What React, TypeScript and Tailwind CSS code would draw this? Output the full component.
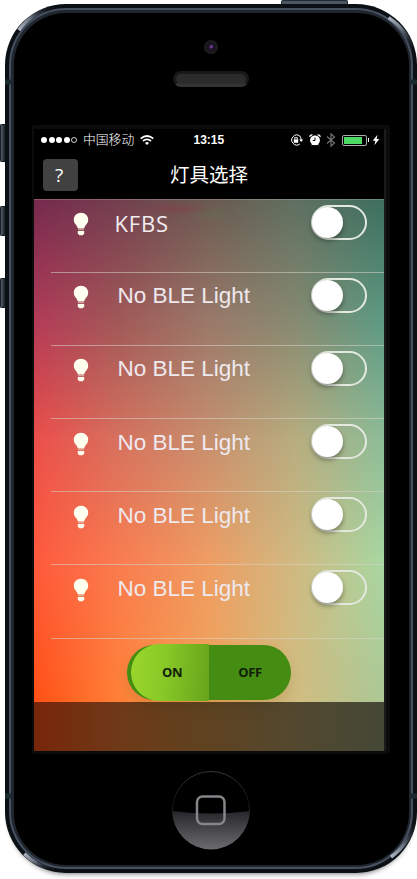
import React from "react";

const lights = ["KFBS", "No BLE Light", "No BLE Light", "No BLE Light", "No BLE Light", "No BLE Light"];

function Bulb() {
  return (
    <svg viewBox="0 0 16 24" className="h-6 w-4 shrink-0" fill="#fffff0">
      <path d="M8 .8C3.900.8.800 3.700.800 7.700c0 2.800 1.600 4.300 2.900 6.100.7 1 .9 1.900 1.200 2.700h6.200c.3-.8.5-1.700 1.200-2.700 1.300-1.800 2.900-3.300 2.900-6.100C15.200 3.700 12.100.8 8 .8Z" />
      <path d="M5 17.200h6v1H5Z" fill="#dcb5a8" />
      <path d="M4.800 19.100h6.400v2.300l-1.500 1.800H6.300l-1.500-1.800Z" />
    </svg>
  );
}

function Toggle() {
  return (
    <div className="flex h-[35px] w-14 items-center rounded-full border-2 border-[#e4e9e0] shadow-[inset_1px_0_1px_rgba(90,90,90,0.3)]">
      <div className="-ml-px h-[31px] w-[31px] shrink-0 rounded-full bg-white shadow-[0_3px_5px_rgba(0,0,0,0.35)]" />
    </div>
  );
}

function LightRow({ name, first }: { name: string; first: boolean }) {
  return (
    <div className="ml-[17px] h-[73.2px] border-b border-[#d8d4cc]/55 pt-[5px]">
      <div className="flex h-[35px] items-center pr-[17px]">
        <div className="ml-[22px] mt-[4px]">
          <Bulb />
        </div>
        {first ? (
          <span className="ml-[25.500px] mt-px flex-1 font-['Open_Sans',sans-serif] text-[22px] leading-6 tracking-[0.8px] text-[#f3edf0]">{name}</span>
        ) : (
          <span className="ml-[28.500px] mt-[2px] flex-1 whitespace-nowrap font-['Liberation_Sans',Arial,sans-serif] text-[22.5px] leading-6 text-[#eee9ee]">{name}</span>
        )}
        <Toggle />
      </div>
    </div>
  );
}

function StatusBar() {
  return (
    <div className="flex h-[23px] items-center text-white">
      <div className="ml-[7px] flex gap-[1.500px]">
        <i className="h-1.5 w-1.5 rounded-full bg-white" />
        <i className="h-1.5 w-1.5 rounded-full bg-white" />
        <i className="h-1.5 w-1.5 rounded-full bg-white" />
        <i className="h-1.5 w-1.5 rounded-full bg-white" />
        <i className="h-1.5 w-1.5 rounded-full border border-white/80" />
      </div>
      <span className="ml-[6px] w-[52px] whitespace-nowrap font-['Liberation_Sans','Noto_Sans_CJK_SC',sans-serif] text-[12.8px] font-light leading-4">中国移动</span>
      <svg viewBox="0 0 14 10" className="ml-[5px] h-2.5 w-3.5" fill="none" stroke="white" strokeWidth="1.7">
        <path d="M.7 3.600Q7-1.600 13.300 3.600M3 6Q7 2.600 11 6" />
        <path d="M5 8Q7 6 9 8L7 10Z" fill="white" stroke="none" />
      </svg>
      <span className="ml-[39.500px] w-[32px] whitespace-nowrap font-['Liberation_Sans',Arial,sans-serif] text-[12px] font-bold leading-4">13:15</span>
      <svg viewBox="0 0 14 12" className="ml-[64px] h-3 w-3.5 shrink-0" fill="none" stroke="white">
        <path d="M9.800 2A5 5 0 1 0 9.800 10" />
        <path d="M9.800 2A5 5 0 0 1 11 6" />
        <path d="M9.200 5.500h4l-2 2.400Z" fill="white" stroke="none" />
        <path d="M3.800 5.300h4.400v3.500H3.800Z" fill="white" stroke="none" />
        <path d="M4.700 5.500V3.600h2.600v1.900" strokeWidth=".9" />
      </svg>
      <svg viewBox="0 0 12 12" className="ml-[5.500px] h-3 w-3 shrink-0" fill="white">
        <circle cx="6" cy="6.300" r="4.900" />
        <path d="M.5 3.200A2.200 2.200 0 0 1 4 .8ZM11.500 3.200A2.200 2.200 0 0 0 8 .8ZM2 11.500l1.500-2h5l1.500 2-2-.7H4Z" />
        <path d="M6 3.500v3H3.800" fill="none" stroke="black" />
      </svg>
      <svg viewBox="0 0 10 14" className="ml-[5px] h-3.5 w-2.5 shrink-0" fill="none" stroke="#777" strokeWidth="1.100">
        <path d="M1 3.500l7.500 6.500L5 13.200V.8L8.500 4 1 10.500" />
      </svg>
      <div className="ml-[5.500px] h-[11px] w-[25px] shrink-0 rounded-[2px] border border-[#aaa] p-px">
        <div className="h-full w-[18px] bg-[#4cd964]" />
      </div>
      <i className="ml-px h-1 w-px bg-white" />
      <svg viewBox="0 0 8 12" className="ml-[3px] h-3 w-2 shrink-0" fill="white">
        <path d="M5.500.8.700 6.700h2.700L2.400 11.200 7.300 5H4.600Z" />
      </svg>
    </div>
  );
}

function Backdrop() {
  return (
    <>
      <div className="col-start-1 row-start-1 bg-[linear-gradient(90deg,#772a4e_0%,#73404f_25%,#6a5a50_50%,#5f7061_75%,#3d6f5e_100%)]" />
      <div className="col-start-1 row-start-1 bg-[linear-gradient(90deg,#b23b58_0%,#a15a58_25%,#9a796a_50%,#868a71_75%,#5d9a83_100%)] [mask-image:linear-gradient(180deg,transparent_0%,black_22%)]" />
      <div className="col-start-1 row-start-1 bg-[linear-gradient(90deg,#ed4f4a_0%,#d7735f_25%,#c8906e_50%,#b8ae80_75%,#8ebd98_100%)] [mask-image:linear-gradient(180deg,transparent_22%,black_44%)]" />
      <div className="col-start-1 row-start-1 bg-[linear-gradient(90deg,#ff5a3c_0%,#fa7d50_25%,#ef9d63_50%,#cfba82_75%,#a9d7a1_100%)] [mask-image:linear-gradient(180deg,transparent_44%,black_66%)]" />
      <div className="col-start-1 row-start-1 bg-[linear-gradient(90deg,#ff5015_0%,#ff8238_25%,#f0a358_50%,#d1bd81_75%,#abc795_100%)] [mask-image:linear-gradient(180deg,transparent_66%,black_91%)]" />
      <div className="col-start-1 row-start-1 bg-[radial-gradient(ellipse_40px_6px_at_144px_10px,rgba(145,45,65,0.35),transparent),radial-gradient(ellipse_22px_9px_at_177px_14px,rgba(85,115,80,0.3),transparent)]" />
    </>
  );
}

function Screen() {
  return (
    <div className="ml-[-1px] mt-[37px] h-[629px] w-[358px] rounded-[3px] bg-[#0b0b0b] pl-[2px] pt-1">
      <div className="flex h-[622px] w-[352px] flex-col border-r-2 border-[#1b1b1b] bg-black">
        <StatusBar />
        <div className="grid h-[47px] grid-cols-[1fr_auto_1fr] items-center">
          <button className="ml-[9px] h-8 w-[35px] rounded-[4px] bg-[#414141] pr-[3px] font-['Open_Sans',sans-serif] text-[19px] leading-none text-white">?</button>
          <h1 className="mt-0.5 whitespace-nowrap font-['Liberation_Sans','Noto_Sans_CJK_SC',sans-serif] text-[19.5px] text-white">灯具选择</h1>
        </div>
        <div className="grid h-[552px] overflow-hidden">
          <Backdrop />
          <div className="z-10 col-start-1 row-start-1 flex flex-col border-t border-white/20">
            <div className="h-[439px]">
              {lights.map((name, i) => (
                <LightRow key={i} name={name} first={i === 0} />
              ))}
            </div>
            <div className="h-[63px] pt-[6px]">
              <div className="mx-auto flex h-[55px] w-[164px] items-center rounded-[28px] bg-[#458c12] font-['Open_Sans',sans-serif] text-[13px] font-bold tracking-[-0.4px] text-[#10200a] shadow-[0_8px_14px_rgba(50,80,0,0.12)]">
                <div className="ml-1 flex h-[57px] w-[78px] shrink-0 items-center justify-center rounded-l-[30px] bg-[linear-gradient(95deg,#9ad62c_0%,#8aca27_40%,#67a41b_100%)] pl-1 pt-0.5">ON</div>
                <div className="flex-1 pt-0.5 text-center">OFF</div>
              </div>
            </div>
            <div className="flex-1 bg-[linear-gradient(90deg,rgba(0,0,0,0.53),rgba(10,10,0,0.63)_50%,rgba(10,0,0,0.64))]" />
          </div>
        </div>
      </div>
    </div>
  );
}

function SideButton({ place }: { place: string }) {
  return <div className={"absolute rounded-l-[2px] border-y border-l border-[#161d24] bg-[linear-gradient(90deg,#596069,#262e37_60%,#0d1319)] " + place} />;
}

export default function App() {
  return (
    <div className="relative h-[879px] w-[417px] overflow-hidden bg-white pl-[5px] pt-1">
      <SideButton place="left-0 top-[124px] h-[38px] w-[6px]" />
      <SideButton place="left-0 top-[206px] h-[30px] w-[6px]" />
      <SideButton place="left-0 top-[278px] h-[30px] w-[6px]" />
      <div className="absolute left-[281px] top-0 h-1.5 w-[67px] rounded-t-[2px] border-x border-t border-[#222a33] bg-[#4d5763]" />
      <div className="relative h-[869px] w-[412px] rounded-[61px] bg-[#0b1015] p-1 shadow-[0_5px_5px_-4px_rgba(0,0,0,0.5)]">
        <div className="h-full rounded-[57px] bg-[#475060] p-[2px]">
          <div className="h-full rounded-[55px] bg-[#20262d] p-[2.500px]">
            <div className="flex h-full flex-col rounded-[52px] bg-black pl-[19.500px]">
              <div className="ml-[171px] mt-[27px] flex h-[14px] w-[14px] items-center justify-center rounded-full bg-[radial-gradient(circle,#5b2a7c_0%,#23152f_22%,#15151a_40%,#28282b_100%)]">
                <i className="h-[3px] w-[3px] rounded-full bg-[#6b3f8c]" />
              </div>
              <div className="ml-[140px] mt-[17px] h-4 w-[76px] rounded-full border-[3px] border-[#191919] border-b-[#343434] bg-[#222] bg-[radial-gradient(circle,#333_0.5px,transparent_1px)] bg-[length:2px_2px]" />
              <div className="mt-px">
                <Screen />
              </div>
            </div>
          </div>
        </div>
        <svg viewBox="0 0 412 869" className="pointer-events-none absolute inset-0 h-full w-full" fill="none">
          <defs>
            <linearGradient id="shine" x1="0" y1="1" x2="1" y2="0">
              <stop stopColor="#aeb5c1" />
              <stop offset=".4" stopColor="#6d7583" />
              <stop offset="1" stopColor="#10161d" stopOpacity="0" />
            </linearGradient>
            <linearGradient id="shineDown" x1="0" y1="0" x2="1" y2="1">
              <stop stopColor="#aeb5c1" />
              <stop offset=".4" stopColor="#6d7583" />
              <stop offset="1" stopColor="#10161d" stopOpacity="0" />
            </linearGradient>
            <linearGradient id="homeGloss" x1="0" y1="0" x2="0" y2="1">
              <stop stopColor="#25252a" />
              <stop offset="1" stopColor="#6b6b70" />
            </linearGradient>
            <linearGradient id="homeRim" x1="0" y1="0" x2="0" y2="1">
              <stop stopColor="#444" />
              <stop offset=".4" stopColor="#151515" />
              <stop offset="1" stopColor="#77777c" />
            </linearGradient>
          </defs>
          <path d="M13.800 26.100A59 59 0 0 1 50 3" stroke="url(#shine)" strokeWidth="3.500" />
          <path d="M383.600 13.600A59 59 0 0 1 409 50" stroke="url(#shineDown)" strokeWidth="3.500" />
          <path d="M19.300 849.700A59 59 0 0 0 50 866" stroke="url(#shineDown)" strokeWidth="3.500" />
          <path d="M386 853A59 59 0 0 0 410 815" stroke="url(#shine)" strokeWidth="3.500" />
          <path d="M0 78h6M406 78h6M0 792h6M406 792h6" stroke="#1b2a31" strokeWidth="5" />
          <circle cx="206" cy="806" r="38.500" fill="#000" stroke="url(#homeRim)" strokeWidth=".8" />
          <path d="M167.500 807Q206 812 244.500 807A38.500 38.500 0 0 1 167.500 807Z" fill="url(#homeGloss)" />
          <rect x="192" y="792.500" width="27.500" height="27.500" rx="5.500" stroke="#85858a" strokeWidth="2.500" />
        </svg>
      </div>
    </div>
  );
}
